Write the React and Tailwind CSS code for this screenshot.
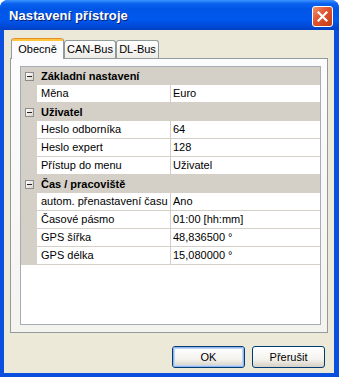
import React from 'react'

const rows = [
  { type: 'cat', label: 'Základní nastavení' },
  { type: 'prop', label: 'Měna', value: 'Euro' },
  { type: 'cat', label: 'Uživatel' },
  { type: 'prop', label: 'Heslo odborníka', value: '64' },
  { type: 'prop', label: 'Heslo expert', value: '128' },
  { type: 'prop', label: 'Přístup do menu', value: 'Uživatel' },
  { type: 'cat', label: 'Čas / pracoviště' },
  { type: 'prop', label: 'autom. přenastavení času', value: 'Ano' },
  { type: 'prop', label: 'Časové pásmo', value: '01:00 [hh:mm]' },
  { type: 'prop', label: 'GPS šířka', value: '48,836500 °' },
  { type: 'prop', label: 'GPS délka', value: '15,080000 °' },
]

function MinusBox() {
  return (
    <div className="flex h-[9px] w-[9px] items-center justify-center border border-[#8c8c8c] bg-[linear-gradient(to_bottom_right,#ffffff,#d8d4c8)]">
      <div className="h-px w-[5px] bg-[#222]" />
    </div>
  )
}

function GridRow({ row }) {
  if (row.type === 'cat') {
    return (
      <div className="flex h-[18px] items-center bg-[#D4D0C8]">
        <div className="flex w-[16px] justify-center pl-px">
          <MinusBox />
        </div>
        <span className="pl-[4px] font-bold text-black">{row.label}</span>
      </div>
    )
  }

  return (
    <div className="flex h-[18px]">
      <div className="w-[16px] bg-[#D4D0C8]" />
      <div className="flex w-[134px] items-center border-b border-r border-[#D4D0C8] bg-white pl-[4px]">
        {row.label}
      </div>
      <div className="flex flex-1 items-center border-b border-[#D4D0C8] bg-white pl-[2px]">
        {row.value}
      </div>
    </div>
  )
}

function Tab({ label, active, width }) {
  if (active) {
    return (
      <div
        className={`relative z-10 -mb-px flex h-[21px] ${width} flex-col rounded-t-[3px] border-x border-[#919B9C] bg-[#FCFCFE]`}
      >
        <div className="h-[3px] rounded-t-[3px] border-t border-[#E68B2C] bg-[#FFC73C]" />
        <div className="flex flex-1 items-center justify-center pb-[2px]">{label}</div>
      </div>
    )
  }

  return (
    <div
      className={`flex h-[18px] ${width} items-center justify-center rounded-t-[3px] border-x border-t border-[#919B9C] bg-[linear-gradient(to_bottom,#ffffff,#ECEBE6)]`}
    >
      {label}
    </div>
  )
}

function Button({ label, focused }) {
  return (
    <div className="flex h-[22px] w-[73px] rounded-[3px] border border-[#003C74] bg-[linear-gradient(to_bottom,#ffffff,#F4F3EE_60%,#D6D0C5)]">
      <div
        className={`flex flex-1 items-center justify-center rounded-[2px] ${focused ? 'border border-[#94B4F0] shadow-[inset_0_0_0_1px_#BCD4F6]' : ''}`}
      >
        {label}
      </div>
    </div>
  )
}

export default function App() {
  return (
    <div className="flex h-[377px] w-[339px] flex-col rounded-t-[8px] bg-[#0A4FDD] font-['Liberation_Sans',Arial,sans-serif] text-[11px] text-black">
      <div className="flex h-[30px] items-center justify-between rounded-t-[8px] bg-[linear-gradient(to_bottom,#3D95FF_0%,#0A62F0_12%,#0055E5_30%,#0058EE_65%,#0049D6_88%,#0040C2_100%)] pl-[9px] pr-[6px]">
        <span className="pt-[2px] text-[13px] font-bold tracking-[0.1px] text-white [text-shadow:1px_1px_0_#0A1F6E]">
          Nastavení přístroje
        </span>
        <div className="mt-[3px] flex h-[21px] w-[21px] items-center justify-center rounded-[3px] border border-white bg-[linear-gradient(to_bottom_right,#F0916E,#E0532F_45%,#C43C14)]">
          <svg width="11" height="11" viewBox="0 0 11 11">
            <path d="M1.5 1.5 L9.5 9.5 M9.5 1.5 L1.5 9.5" stroke="white" strokeWidth="2.2" strokeLinecap="square" />
          </svg>
        </div>
      </div>

      <div className="mb-[4px] ml-[4px] mr-[5px] flex flex-1 flex-col bg-[#ECE9D8] pl-[6px] pr-[6px] pt-[8px]">
        <div className="flex items-end pl-px">
          <Tab label="Obecně" active width="w-[53px]" />
          <Tab label="CAN-Bus" width="w-[52px]" />
          <Tab label="DL-Bus" width="w-[43px]" />
        </div>

        <div className="flex h-[275px] flex-col border border-[#919B9C] bg-[linear-gradient(to_bottom,#FCFCFE,#F4F3EE)] pb-[7px] pl-[9px] pr-[6px] pt-[7px]">
          <div className="flex flex-1 flex-col border border-[#A5ACB5] bg-white">
            {rows.map((row, i) => (
              <GridRow key={i} row={row} />
            ))}
          </div>
        </div>

        <div className="flex justify-end gap-[7px] pr-[3px] pt-[13px]">
          <Button label="OK" focused />
          <Button label="Přerušit" />
        </div>
      </div>
    </div>
  )
}
